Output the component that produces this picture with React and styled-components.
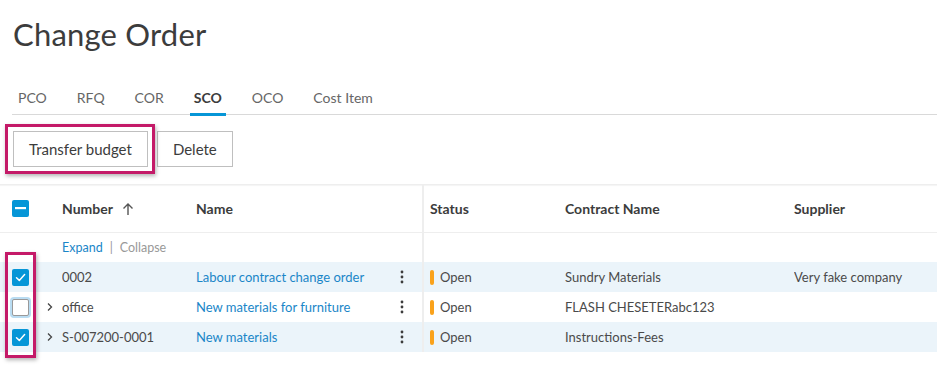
import React from "react";
import styled, { createGlobalStyle } from "styled-components";

const GlobalStyle = createGlobalStyle`
  body {
    margin: 0;
    background: #fff;
    font-family: "Lato", "Noto Sans", sans-serif;
    color: #3c3c3c;
  }
`;

const BLUE = "#0696d7";
const LINK = "#1a86c8";
const MAGENTA = "#c41a68";

const Page = styled.div`
  width: 937px;
  height: 370px;
  overflow: hidden;
  position: relative;
`;

const Title = styled.h1`
  margin: 0;
  padding: 15px 0 0 13px;
  height: 62px;
  box-sizing: border-box;
  font-size: 31px;
  font-weight: 400;
  color: #3c3c3c;
  letter-spacing: 0.2px;
`;

const Tabs = styled.div`
  display: flex;
  gap: 22px;
  margin: 23px 0 0 12px;
  padding-left: 2px;
  border-bottom: 1px solid #d9d9d9;
  height: 30px;
  box-sizing: border-box;
`;

const Tab = styled.div`
  position: relative;
  padding: 0 4px;
  font-size: 14px;
  line-height: 26px;
  color: ${(p) => (p.active ? "#3c3c3c" : "#666")};
  font-weight: ${(p) => (p.active ? 700 : 400)};
  &::after {
    content: "";
    display: ${(p) => (p.active ? "block" : "none")};
    position: absolute;
    left: 0;
    right: 0;
    bottom: -2px;
    height: 3px;
    background: ${BLUE};
  }
`;

const Toolbar = styled.div`
  display: flex;
  gap: 9px;
  padding: 16px 0 17px 13px;
  border-bottom: 1px solid #eee;
  box-shadow: 0 1px 1px rgba(0, 0, 0, 0.04);
`;

const Highlight = styled.div`
  position: relative;
  &::after {
    content: "";
    position: absolute;
    inset: -7px -7px -7px -8px;
    border: 3px solid ${MAGENTA};
    box-shadow: 1px 2px 4px rgba(0, 0, 0, 0.3);
    pointer-events: none;
  }
`;

const Button = styled.button`
  height: 36px;
  padding: 0 15px;
  background: #fff;
  border: 1px solid #bfbfbf;
  border-radius: 0;
  font-family: inherit;
  font-size: 15px;
  color: #3c3c3c;
`;

const Table = styled.div`
  position: relative;
  display: grid;
  grid-template-columns: 46px 16px 134px 197px 29px 143px 229px 1fr;
`;

const HeadCell = styled.div`
  height: 47px;
  display: flex;
  align-items: center;
  font-size: 14px;
  font-weight: 700;
  color: #3c3c3c;
  border-bottom: 1px solid #eee;
  padding-left: ${(p) => p.pl || 0}px;
  border-left: ${(p) => (p.divider ? "2px solid #eee" : "none")};
`;

const SubCell = styled.div`
  height: 29px;
  display: flex;
  align-items: center;
  font-size: 12.5px;
  border-left: ${(p) => (p.divider ? "2px solid #eee" : "none")};
`;

const Cell = styled.div`
  height: 30px;
  display: flex;
  align-items: center;
  font-size: 13px;
  color: #4a4a4a;
  background: ${(p) => (p.selected ? "#ebf4fa" : "#fff")};
  padding-left: ${(p) => p.pl || 0}px;
  border-left: ${(p) => (p.divider ? "2px solid #eee" : "none")};
  white-space: nowrap;
  overflow: hidden;
`;

const Link = styled.span`
  color: ${LINK};
`;

const Muted = styled.span`
  color: #999;
  margin: 0 ${(p) => p.gap || 0}px;
`;

const CheckBox = styled.div`
  width: 17px;
  height: 17px;
  box-sizing: border-box;
  margin-left: 12px;
  border-radius: 2px;
  display: flex;
  align-items: center;
  justify-content: center;
  background: ${(p) => (p.on ? BLUE : "#fff")};
  border: ${(p) => (p.on ? "none" : "1px solid #999")};
  box-shadow: ${(p) => (p.on ? "none" : "0 0 0 2px #b9dcf2")};
`;

const StatusBar = styled.span`
  width: 4px;
  height: 15px;
  border-radius: 2px;
  background: #faa21b;
  margin-right: 6px;
`;

const ColumnMark = styled.div`
  position: absolute;
  left: 5px;
  top: 67px;
  width: 31px;
  height: 106px;
  box-sizing: border-box;
  border: 3px solid ${MAGENTA};
  box-shadow: 1px 2px 4px rgba(0, 0, 0, 0.3);
  pointer-events: none;
`;

const Check = () => (
  <svg width="13" height="13" viewBox="0 0 13 13">
    <path d="M2.5 6.8 L5.3 9.4 L10.6 3.6" fill="none" stroke="#fff" strokeWidth="1.5" strokeLinecap="round" strokeLinejoin="round" />
  </svg>
);

const Dash = () => (
  <svg width="11" height="3" viewBox="0 0 11 3">
    <rect x="0" y="0" width="11" height="2.2" fill="#fff" />
  </svg>
);

const Chevron = () => (
  <svg width="8" height="10" viewBox="0 0 8 10">
    <path d="M2 1.5 L5.5 5 L2 8.5" fill="none" stroke="#444" strokeWidth="1.3" />
  </svg>
);

const Kebab = () => (
  <svg width="4" height="16" viewBox="0 0 4 16">
    <circle cx="2" cy="3" r="1.4" fill="#3c3c3c" />
    <circle cx="2" cy="8" r="1.4" fill="#3c3c3c" />
    <circle cx="2" cy="13" r="1.4" fill="#3c3c3c" />
  </svg>
);

const UpArrow = () => (
  <svg width="14" height="14" viewBox="0 0 14 14" style={{ marginLeft: 8 }}>
    <path d="M7 13 V2 M2.5 6.5 L7 2 L11.5 6.5" fill="none" stroke="#555" strokeWidth="1.4" />
  </svg>
);

const rows = [
  { sel: true, exp: false, num: "0002", name: "Labour contract change order", contract: "Sundry Materials", supplier: "Very fake company" },
  { sel: false, exp: true, num: "office", name: "New materials for furniture", contract: "FLASH CHESETERabc123", supplier: "" },
  { sel: true, exp: true, num: "S-007200-0001", name: "New materials", contract: "Instructions-Fees", supplier: "" },
];

export default function App() {
  return (
    <Page>
      <GlobalStyle />
      <Title>Change Order</Title>
      <Tabs>
        {["PCO", "RFQ", "COR", "SCO", "OCO", "Cost Item"].map((t) => (
          <Tab key={t} active={t === "SCO"}>{t}</Tab>
        ))}
      </Tabs>
      <Toolbar>
        <Highlight>
          <Button>Transfer budget</Button>
        </Highlight>
        <Button>Delete</Button>
      </Toolbar>
      <Table>
        <HeadCell>
          <CheckBox on>
            <Dash />
          </CheckBox>
        </HeadCell>
        <HeadCell />
        <HeadCell>
          Number <UpArrow />
        </HeadCell>
        <HeadCell>Name</HeadCell>
        <HeadCell />
        <HeadCell divider pl={6}>Status</HeadCell>
        <HeadCell>Contract Name</HeadCell>
        <HeadCell>Supplier</HeadCell>

        <SubCell />
        <SubCell />
        <SubCell>
          <Link>Expand</Link>
          <Muted gap={7}>|</Muted>
          <Muted>Collapse</Muted>
        </SubCell>
        <SubCell />
        <SubCell />
        <SubCell divider />
        <SubCell />
        <SubCell />

        {rows.map((r) => (
          <React.Fragment key={r.num}>
            <Cell selected={r.sel}>
              <CheckBox on={r.sel}>{r.sel && <Check />}</CheckBox>
            </Cell>
            <Cell selected={r.sel}>{r.exp && <Chevron />}</Cell>
            <Cell selected={r.sel}>{r.num}</Cell>
            <Cell selected={r.sel}>
              <Link>{r.name}</Link>
            </Cell>
            <Cell selected={r.sel} pl={7}>
              <Kebab />
            </Cell>
            <Cell selected={r.sel} divider pl={6}>
              <StatusBar />
              Open
            </Cell>
            <Cell selected={r.sel}>{r.contract}</Cell>
            <Cell selected={r.sel}>{r.supplier}</Cell>
          </React.Fragment>
        ))}
        <ColumnMark />
      </Table>
    </Page>
  );
}
